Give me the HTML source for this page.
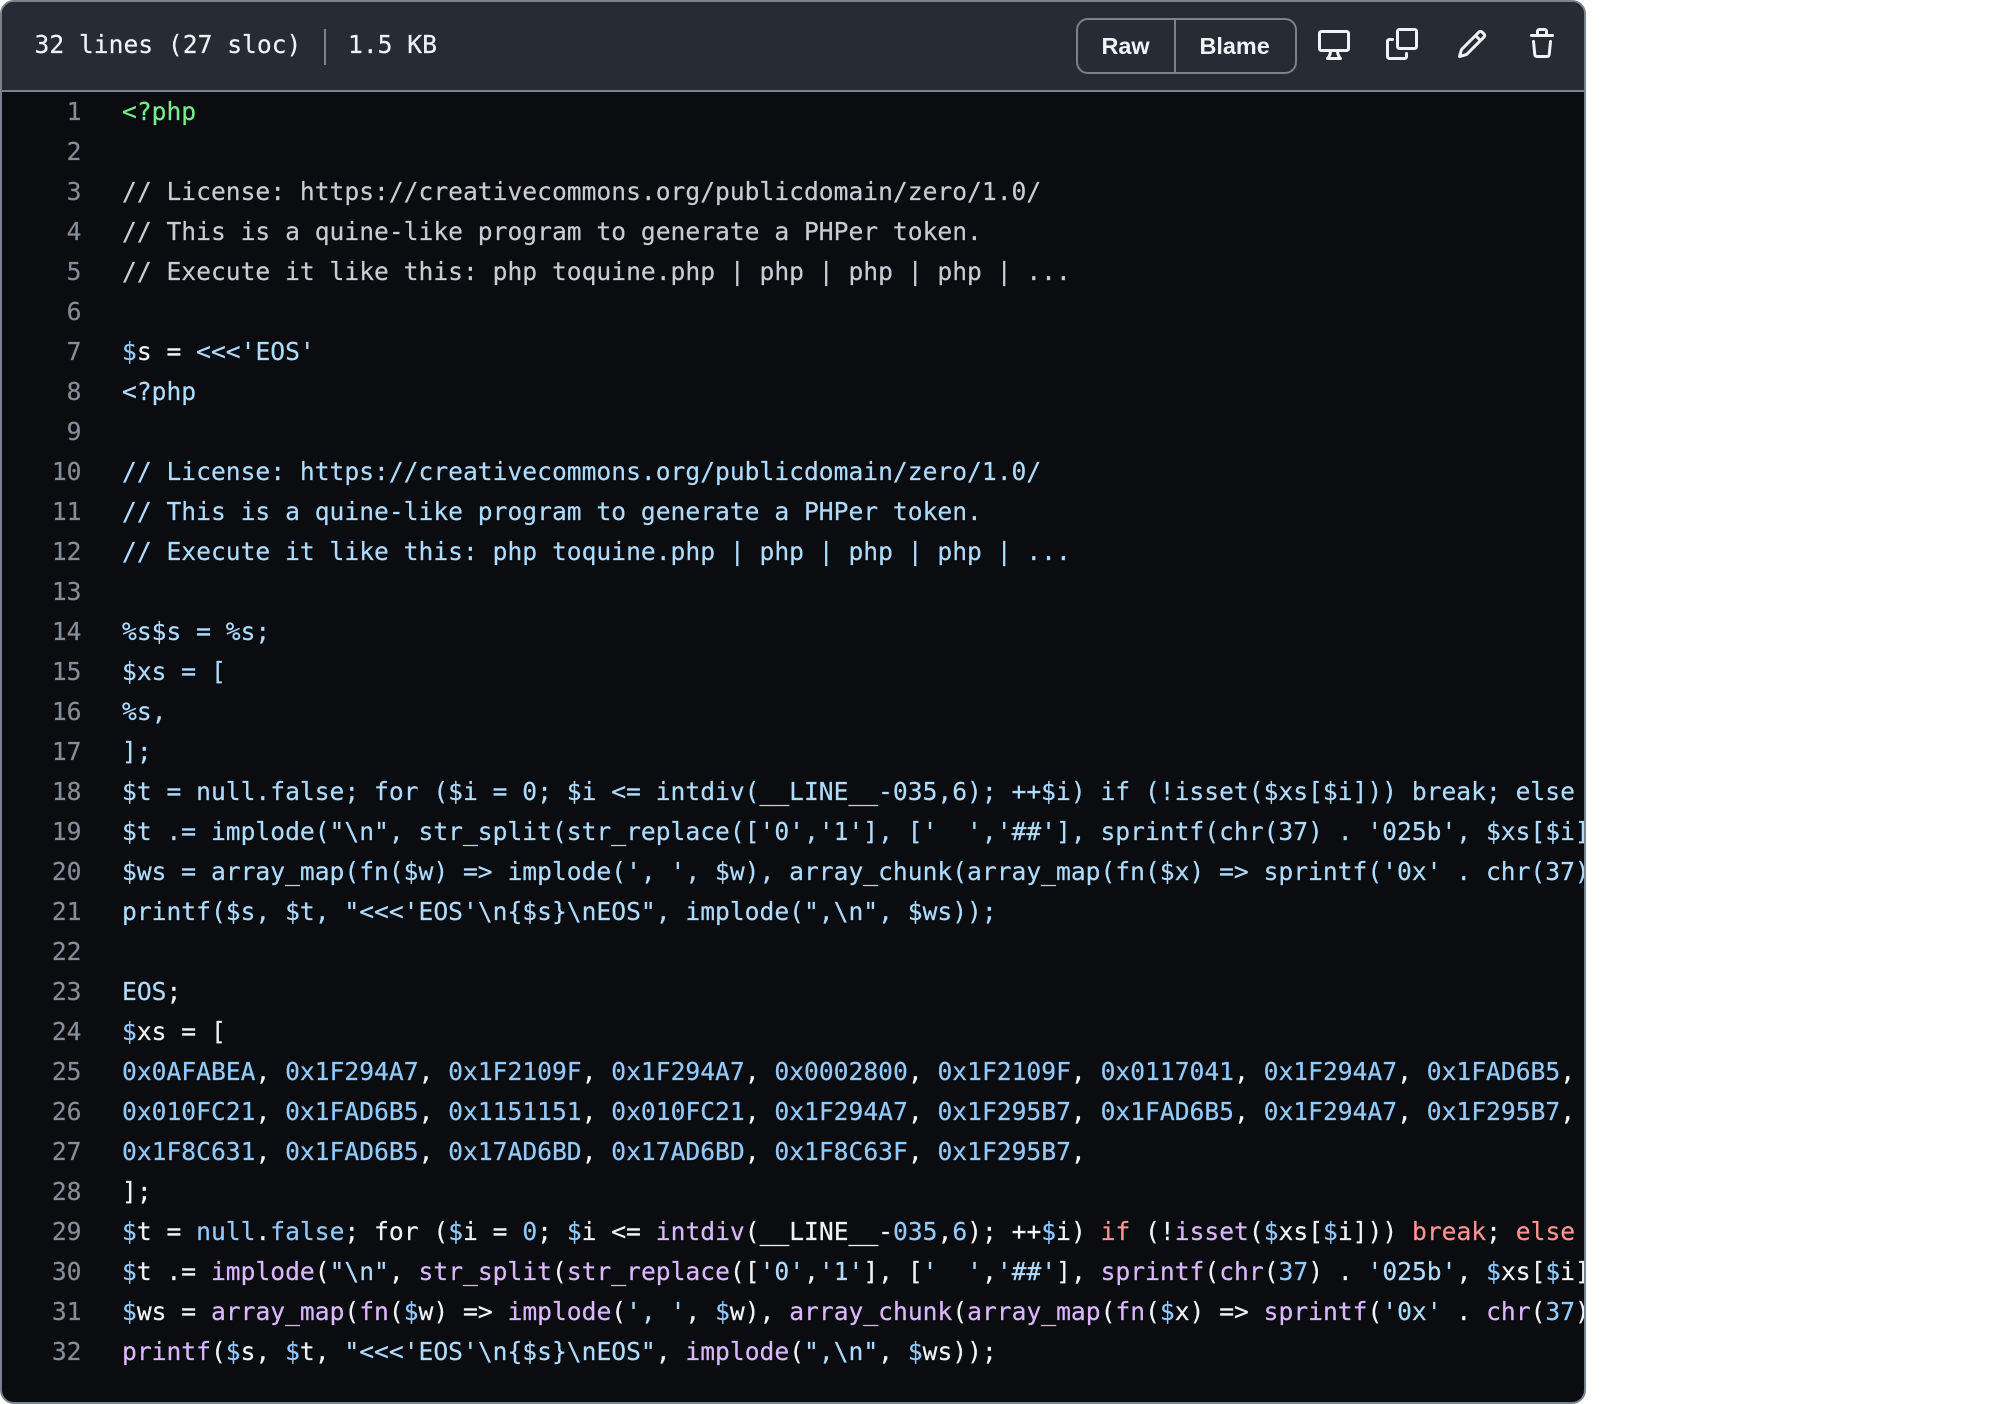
<!DOCTYPE html>
<html><head><meta charset="utf-8"><title>toquine.php</title>
<style>
*{box-sizing:border-box}
html,body{margin:0;padding:0;background:#fff;width:1996px;height:1404px;overflow:hidden}
#p{position:absolute;left:0;top:0;width:1586px;height:1404px;border:2px solid #7a828e;border-radius:14px;overflow:hidden;background:#0a0c10}
#h{position:absolute;left:-2px;top:-2px;width:1586px;height:92px;background:#272b33;border-bottom:2px solid #7a828e}
.m{font-family:"DejaVu Sans Mono","Liberation Mono",monospace;font-size:24.63px;white-space:pre;-webkit-text-stroke:.2px}
.t{position:absolute;color:#f0f3f6;line-height:40px;top:25px}
#d{position:absolute;left:324px;top:29px;width:2px;height:36px;background:#7a828e}
#g{position:absolute;left:1076px;top:18px;width:221px;height:56px;border:2px solid #7a828e;border-radius:12px;font:bold 23.4px/52px "Liberation Sans",sans-serif;color:#f0f3f6}
#g span{position:absolute;top:0}
#g u{position:absolute;left:96px;top:0;width:2px;height:52px;background:#7a828e}
svg{position:absolute;top:28px;fill:#f0f3f6}
#n{position:absolute;left:-4.5px;top:90px;width:84px;text-align:right;color:#858d98;line-height:40px}
#c{position:absolute;left:120px;top:90px;width:1462px;overflow:hidden;color:#f0f3f6;line-height:40px}
i{font-style:normal}
.c{color:#91cbff}.s{color:#addcff}.k{color:#ff9492}.e{color:#dbb7ff}.g{color:#72f088}.o{color:#c6cdd5}
</style></head><body>
<div id="p">
<div id="h">
<div class="m t" style="left:34.5px">32 lines (27 sloc)</div>
<div id="d"></div>
<div class="m t" style="left:348px">1.5 KB</div>
<div id="g"><span style="left:23.5px">Raw</span><u></u><span style="left:121.5px">Blame</span></div>
<svg style="left:1318px" width="32" height="32" viewBox="0 0 16 16"><path d="M14.25 1c.966 0 1.75.784 1.75 1.75v7.5A1.75 1.75 0 0 1 14.25 12h-3.727c.099 1.041.52 1.872 1.292 2.757A.752.752 0 0 1 11.25 16h-6.5a.75.75 0 0 1-.565-1.243c.772-.885 1.192-1.716 1.292-2.757H1.75A1.75 1.75 0 0 1 0 10.25v-7.5C0 1.784.784 1 1.75 1ZM1.75 2.5a.25.25 0 0 0-.25.25v7.5c0 .138.112.25.25.25h12.5a.25.25 0 0 0 .25-.25v-7.5a.25.25 0 0 0-.25-.25ZM9.018 12H6.982a5.72 5.72 0 0 1-.765 2.5h3.566a5.72 5.72 0 0 1-.765-2.5Z"/></svg>
<svg style="left:1386px" width="32" height="32" viewBox="0 0 16 16"><path d="M0 6.75C0 5.784.784 5 1.75 5h1.5a.75.75 0 0 1 0 1.5h-1.5a.25.25 0 0 0-.25.25v7.5c0 .138.112.25.25.25h7.5a.25.25 0 0 0 .25-.25v-1.5a.75.75 0 0 1 1.5 0v1.5A1.75 1.75 0 0 1 9.25 16h-7.5A1.75 1.75 0 0 1 0 14.25Z"/><path d="M5 1.75C5 .784 5.784 0 6.75 0h7.5C15.216 0 16 .784 16 1.75v7.5A1.75 1.75 0 0 1 14.25 11h-7.5A1.75 1.75 0 0 1 5 9.25Zm1.75-.25a.25.25 0 0 0-.25.25v7.5c0 .138.112.25.25.25h7.5a.25.25 0 0 0 .25-.25v-7.5a.25.25 0 0 0-.25-.25Z"/></svg>
<svg style="left:1456px" width="32" height="32" viewBox="0 0 16 16"><path d="M11.013 1.427a1.75 1.75 0 0 1 2.474 0l1.086 1.086a1.75 1.75 0 0 1 0 2.474l-8.61 8.61c-.21.21-.47.364-.756.445l-3.251.93a.75.75 0 0 1-.927-.928l.929-3.25c.081-.286.235-.547.445-.758l8.61-8.61Zm.176 4.823L9.75 4.81l-6.286 6.287a.253.253 0 0 0-.064.108l-.558 1.953 1.953-.558a.253.253 0 0 0 .108-.064Zm1.238-3.763a.25.25 0 0 0-.354 0L10.811 3.75l1.439 1.44 1.263-1.263a.25.25 0 0 0 0-.354Z"/></svg>
<svg style="left:1526px" width="32" height="32" viewBox="0 0 16 16"><path d="M11 1.75V3h2.25a.75.75 0 0 1 0 1.5H2.75a.75.75 0 0 1 0-1.5H5V1.75C5 .784 5.784 0 6.75 0h2.5C10.216 0 11 .784 11 1.75ZM4.496 6.675l.66 6.6a.25.25 0 0 0 .249.225h5.19a.25.25 0 0 0 .249-.225l.66-6.6a.75.75 0 0 1 1.492.149l-.66 6.6A1.748 1.748 0 0 1 10.595 15h-5.19a1.75 1.75 0 0 1-1.741-1.575l-.66-6.6a.75.75 0 1 1 1.492-.15ZM6.5 1.75V3h3V1.75a.25.25 0 0 0-.25-.25h-2.5a.25.25 0 0 0-.25.25Z"/></svg>
</div>
<div id="n" class="m">1
2
3
4
5
6
7
8
9
10
11
12
13
14
15
16
17
18
19
20
21
22
23
24
25
26
27
28
29
30
31
32</div>
<div id="c" class="m"><i class="g">&lt;?php</i>

<i class="o">// License: https://creativecommons.org/publicdomain/zero/1.0/</i>
<i class="o">// This is a quine-like program to generate a PHPer token.</i>
<i class="o">// Execute it like this: php toquine.php | php | php | php | ...</i>

<i class="c">$</i>s = <i class="s">&lt;&lt;&lt;'EOS'</i>
<i class="s">&lt;?php

// License: https://creativecommons.org/publicdomain/zero/1.0/
// This is a quine-like program to generate a PHPer token.
// Execute it like this: php toquine.php | php | php | php | ...

%s$s = %s;
$xs = [
%s,
];
$t = null.false; for ($i = 0; $i &lt;= intdiv(__LINE__-035,6); ++$i) if (!isset($xs[$i])) break; else
$t .= implode("\n", str_split(str_replace(['0','1'], ['  ','##'], sprintf(chr(37) . '025b', $xs[$i]))));
$ws = array_map(fn($w) =&gt; implode(', ', $w), array_chunk(array_map(fn($x) =&gt; sprintf('0x' . chr(37) . '07X', $x), $xs), 9));
printf($s, $t, "&lt;&lt;&lt;'EOS'\n{$s}\nEOS", implode(",\n", $ws));

EOS</i>;
<i class="c">$</i>xs = [
<i class="c">0x0AFABEA</i>, <i class="c">0x1F294A7</i>, <i class="c">0x1F2109F</i>, <i class="c">0x1F294A7</i>, <i class="c">0x0002800</i>, <i class="c">0x1F2109F</i>, <i class="c">0x0117041</i>, <i class="c">0x1F294A7</i>, <i class="c">0x1FAD6B5</i>,
<i class="c">0x010FC21</i>, <i class="c">0x1FAD6B5</i>, <i class="c">0x1151151</i>, <i class="c">0x010FC21</i>, <i class="c">0x1F294A7</i>, <i class="c">0x1F295B7</i>, <i class="c">0x1FAD6B5</i>, <i class="c">0x1F294A7</i>, <i class="c">0x1F295B7</i>,
<i class="c">0x1F8C631</i>, <i class="c">0x1FAD6B5</i>, <i class="c">0x17AD6BD</i>, <i class="c">0x17AD6BD</i>, <i class="c">0x1F8C63F</i>, <i class="c">0x1F295B7</i>,
];
<i class="c">$</i>t = <i class="c">null</i>.<i class="c">false</i>; for (<i class="c">$</i>i = <i class="c">0</i>; <i class="c">$</i>i &lt;= <i class="e">intdiv</i>(__LINE__-<i class="c">035</i>,<i class="c">6</i>); ++<i class="c">$</i>i) <i class="k">if</i> (!<i class="e">isset</i>(<i class="c">$</i>xs[<i class="c">$</i>i])) <i class="k">break</i>; <i class="k">else</i>
<i class="c">$</i>t .= <i class="e">implode</i>(<i class="s">"\n"</i>, <i class="e">str_split</i>(<i class="e">str_replace</i>([<i class="s">'0'</i>,<i class="s">'1'</i>], [<i class="s">'  '</i>,<i class="s">'##'</i>], <i class="e">sprintf</i>(<i class="e">chr</i>(<i class="c">37</i>) . <i class="s">'025b'</i>, <i class="c">$</i>xs[<i class="c">$</i>i]))));
<i class="c">$</i>ws = <i class="e">array_map</i>(<i class="e">fn</i>(<i class="c">$</i>w) =&gt; <i class="e">implode</i>(<i class="s">', '</i>, <i class="c">$</i>w), <i class="e">array_chunk</i>(<i class="e">array_map</i>(<i class="e">fn</i>(<i class="c">$</i>x) =&gt; <i class="e">sprintf</i>(<i class="s">'0x'</i> . <i class="e">chr</i>(<i class="c">37</i>) . <i class="s">'07X'</i>, <i class="c">$</i>x), <i class="c">$</i>xs), <i class="c">9</i>));
<i class="e">printf</i>(<i class="c">$</i>s, <i class="c">$</i>t, <i class="s">"&lt;&lt;&lt;'EOS'\n{$s}\nEOS"</i>, <i class="e">implode</i>(<i class="s">",\n"</i>, <i class="c">$</i>ws));</div>
</div>
</body></html>
